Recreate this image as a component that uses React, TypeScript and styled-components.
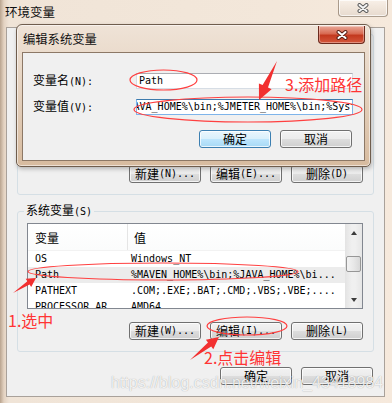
import styled, { createGlobalStyle } from "styled-components";

const GlobalStyle = createGlobalStyle`
  html, body {
    margin: 0;
    padding: 0;
    overflow: hidden;
    background: #f1e5d8;
  }
  body {
    font-family: "Noto Sans CJK SC", "Liberation Sans", sans-serif;
  }
`;

const Screen = styled.div`
  position: relative;
  width: 392px;
  height: 403px;
  overflow: hidden;
  display: flex;
  flex-direction: column;
  background: linear-gradient(90deg, #b9a48f 0px, #e4d3c2 4px, #f0e4d7 9px, #f3e7da 70%, #f6e9dc 100%);
  font-size: 12px;
  color: #000;
`;

const TitleBar = styled.div`
  height: 27px;
  flex-shrink: 0;
  display: flex;
  justify-content: space-between;
  align-items: flex-start;
  padding: 0 4px 0 5px;
`;

const Caption = styled.span`
  margin-top: 5px;
  font-size: 12.5px;
  line-height: 14px;
  color: #111;
`;

const CloseButton = styled.div<{ $red?: boolean }>`
  width: ${(p) => (p.$red ? 47 : 50)}px;
  height: ${(p) => (p.$red ? 18 : 17)}px;
  margin-top: ${(p) => (p.$red ? 1 : 0)}px;
  box-sizing: border-box;
  display: flex;
  align-items: center;
  justify-content: center;
  border: 1px solid ${(p) => (p.$red ? "#6b2a1d" : "rgba(110, 90, 70, 0.55)")};
  border-top: none;
  border-radius: 0 0 4px 4px;
  background: ${(p) =>
    p.$red
      ? "linear-gradient(#e9a898 0%, #d86a52 45%, #c3391f 55%, #d4573c 100%)"
      : "linear-gradient(#f8f0e8 0%, #f0e5da 50%, #e7dace 100%)"};
  box-shadow: inset 0 0 0 1px rgba(255, 255, 255, ${(p) => (p.$red ? 0.35 : 0.7)});
`;

const OuterBody = styled.div`
  flex: 1;
  margin: 0 7px 6px 6px;
  border: 1px solid #a9a19a;
  background: #f0f0f0;
  padding: 0 10px 0 10px;
  display: flex;
  flex-direction: column;
`;

const Group = styled.fieldset<{ $gap: number; $top: number }>`
  margin: ${(p) => p.$gap}px 0 0 0;
  padding: ${(p) => p.$top}px 10px 11px 9px;
  border: 1px solid #d5dfe5;
  border-radius: 3px;
  min-width: 0;
`;

const Legend = styled.legend`
  padding: 0 2px;
  margin-left: -3px;
  font-size: 12px;
  line-height: 12px;
`;

const ListBox = styled.div<{ $h: number }>`
  height: ${(p) => p.$h}px;
  box-sizing: border-box;
  border: 1px solid #828790;
  background: #fff;
  display: flex;
  overflow: hidden;
`;

const Table = styled.div`
  flex: 1;
  min-width: 0;
`;

const HeaderRow = styled.div`
  height: 26px;
  display: grid;
  grid-template-columns: 100px 1fr;
  background: linear-gradient(#ffffff, #fbfcfc);
  border-bottom: 1px solid #f2f2f2;
`;

const HeaderCell = styled.div<{ $pad: number; $sep?: boolean }>`
  display: flex;
  align-items: center;
  padding-left: ${(p) => p.$pad}px;
  border-right: ${(p) => (p.$sep ? "1px solid #e5e5e5" : "none")};
  font-size: 12px;
`;

const Row = styled.div<{ $selected?: boolean }>`
  height: 16px;
  display: grid;
  grid-template-columns: 100px 1fr;
  background: ${(p) => (p.$selected ? "#ececec" : "transparent")};
`;

const Cell = styled.div<{ $pad: number }>`
  padding-left: ${(p) => p.$pad}px;
  font-family: "DejaVu Sans Mono", "Liberation Mono", monospace;
  font-size: 10px;
  line-height: 16px;
  white-space: nowrap;
  overflow: hidden;
`;

const ScrollBar = styled.div`
  width: 17px;
  flex-shrink: 0;
  display: flex;
  flex-direction: column;
  background: linear-gradient(90deg, #e3e3e3, #f0f0f0 40%, #f0f0f0 60%, #e6e6e6);
`;

const ScrollArrow = styled.div`
  height: 17px;
  display: flex;
  align-items: center;
  justify-content: center;
`;

const Tri = styled.div<{ $up?: boolean }>`
  width: 0;
  height: 0;
  border-left: 3.5px solid transparent;
  border-right: 3.5px solid transparent;
  border-${(p) => (p.$up ? "bottom" : "top")}: 4px solid #3c3c3c;
`;

const Track = styled.div`
  flex: 1;
  padding-top: 15px;
`;

const Thumb = styled.div`
  height: 16px;
  margin: 0 1px;
  box-sizing: border-box;
  border: 1px solid #979797;
  border-radius: 2px;
  background: linear-gradient(90deg, #f3f3f3, #e8e8e8 50%, #d8d8d8);
`;

const ButtonRow = styled.div<{ $gap: number; $right?: number }>`
  margin-top: ${(p) => p.$gap}px;
  margin-right: ${(p) => p.$right ?? 0}px;
  display: flex;
  justify-content: flex-end;
  gap: 9px;
`;

const Button = styled.button<{ $default?: boolean }>`
  width: 72px;
  height: 18px;
  padding: 0;
  box-sizing: border-box;
  display: flex;
  align-items: center;
  justify-content: center;
  border: 1px solid ${(p) => (p.$default ? "#3c7fb1" : "#707070")};
  border-radius: 3px;
  background: ${(p) =>
    p.$default
      ? "linear-gradient(#eaf6fd 0%, #d9f0fc 50%, #bee6fd 51%, #a7d9f5 100%)"
      : "linear-gradient(#f2f2f2 0%, #ebebeb 50%, #dddddd 51%, #cfcfcf 100%)"};
  box-shadow: inset 0 0 0 1px rgba(255, 255, 255, 0.75);
  font-family: inherit;
  font-size: 12px;
  line-height: 14px;
  color: #000;
`;

const Mono = styled.span`
  font-family: "DejaVu Sans Mono", "Liberation Mono", monospace;
  font-size: 10px;
`;

/* the edit dialog that sits over the environment window */
const Dialog = styled.div`
  position: absolute;
  left: 16px;
  top: 24px;
  width: 355px;
  height: 143px;
  box-sizing: border-box;
  display: flex;
  flex-direction: column;
  padding: 0 5px 5px 5px;
  border: 1px solid #6f5d4d;
  border-radius: 6px 6px 5px 5px;
  background: linear-gradient(#efe3d7 0%, #e6d4c2 40%, #d7bb9f 100%);
  box-shadow: inset 0 0 0 1px rgba(255, 255, 255, 0.55), 1px 2px 4px rgba(0, 0, 0, 0.25);
`;

const DialogTitle = styled.div`
  height: 27px;
  flex-shrink: 0;
  display: flex;
  justify-content: space-between;
  align-items: flex-start;
  padding-left: 1px;
`;

const DialogCaption = styled.span`
  margin-top: 7px;
  font-size: 12.3px;
  line-height: 14px;
  color: #111;
`;

const DialogBody = styled.div`
  flex: 1;
  border: 1px solid #8c7866;
  background: #f0f0f0;
  padding: 20px 11px 0 10px;
`;

const Form = styled.div`
  display: grid;
  grid-template-columns: 103px 217px;
  row-gap: 10px;
  align-items: center;
`;

const Label = styled.span`
  font-size: 12px;
  line-height: 14px;
`;

const Field = styled.div<{ $focus?: boolean }>`
  height: 16px;
  box-sizing: border-box;
  border: 1px solid ${(p) => (p.$focus ? "#7eb4ea" : "#d6dde5")};
  border-top-color: ${(p) => (p.$focus ? "#3d7bad" : "#abadb3")};
  background: #fff;
  padding-left: 2px;
  overflow: hidden;
  white-space: nowrap;
  font-family: "DejaVu Sans Mono", "Liberation Mono", monospace;
  font-size: 10px;
  line-height: 14px;
`;

const Scrolled = styled.span`
  display: inline-block;
  margin-left: -17.5px;
`;

/* red hand-drawn notes */
const Notes = styled.svg`
  position: absolute;
  left: 0;
  top: 0;
  pointer-events: none;
`;

const Note = styled.span<{ $x: number; $y: number }>`
  position: absolute;
  left: ${(p) => p.$x}px;
  top: ${(p) => p.$y}px;
  font-size: 16px;
  line-height: 16px;
  color: #ff3434;
  white-space: nowrap;
`;

const Watermark = styled.span`
  position: absolute;
  left: 111px;
  top: 374px;
  font-family: "Liberation Sans", Arial, sans-serif;
  font-size: 16px;
  line-height: 18px;
  color: rgba(255, 255, 255, 0.85);
  text-shadow: 0 0 1px rgba(0, 0, 0, 0.35);
  white-space: nowrap;
`;

function CloseX({ fill, outline }: { fill: string; outline: string }) {
  return (
    <svg width="12" height="10" viewBox="0 0 12 10">
      <path d="M2.5 2 L9.5 8 M9.5 2 L2.5 8" stroke={outline} strokeWidth="4" strokeLinecap="round" />
      <path d="M2.5 2 L9.5 8 M9.5 2 L2.5 8" stroke={fill} strokeWidth="2" strokeLinecap="round" />
    </svg>
  );
}

function arrow(x1: number, y1: number, x2: number, y2: number, head: number, half: number, shaft: number) {
  const len = Math.hypot(x2 - x1, y2 - y1);
  const ux = (x2 - x1) / len;
  const uy = (y2 - y1) / len;
  const nx = -uy;
  const ny = ux;
  const bx = x2 - ux * head;
  const by = y2 - uy * head;
  const pts = [
    [x1, y1],
    [bx + nx * shaft, by + ny * shaft],
    [bx + nx * half, by + ny * half],
    [x2, y2],
    [bx - nx * half, by - ny * half],
    [bx - nx * shaft, by - ny * shaft],
  ];
  return pts.map((p) => p.map((v) => v.toFixed(1)).join(",")).join(" ");
}

const rows = [
  { name: "OS", value: "Windows_NT" },
  { name: "Path", value: "%MAVEN_HOME%\\bin;%JAVA_HOME%\\bi...", selected: true },
  { name: "PATHEXT", value: ".COM;.EXE;.BAT;.CMD;.VBS;.VBE;...." },
  { name: "PROCESSOR_AR", value: "AMD64" },
];

export default function App() {
  return (
    <>
      <GlobalStyle />
      <Screen>
        <TitleBar>
          <Caption>环境变量</Caption>
          <CloseButton>
            <CloseX fill="#f4f4f4" outline="#5d5d5d" />
          </CloseButton>
        </TitleBar>

        <OuterBody>
          <Group $gap={0} $top={6}>
            <Legend>用户变量(U)</Legend>
            <ListBox $h={105} />
            <ButtonRow $gap={14}>
              <Button>新建<Mono>(N)...</Mono></Button>
              <Button>编辑<Mono>(E)...</Mono></Button>
              <Button>删除<Mono>(D)</Mono></Button>
            </ButtonRow>
          </Group>

          <Group $gap={9} $top={5}>
            <Legend>系统变量<Mono>(S)</Mono></Legend>
            <ListBox $h={86}>
              <Table>
                <HeaderRow>
                  <HeaderCell $pad={7} $sep>变量</HeaderCell>
                  <HeaderCell $pad={6}>值</HeaderCell>
                </HeaderRow>
                {rows.map((r) => (
                  <Row key={r.name} $selected={r.selected}>
                    <Cell $pad={7}>{r.name}</Cell>
                    <Cell $pad={3}>{r.value}</Cell>
                  </Row>
                ))}
              </Table>
              <ScrollBar>
                <ScrollArrow>
                  <Tri $up />
                </ScrollArrow>
                <Track>
                  <Thumb />
                </Track>
                <ScrollArrow>
                  <Tri />
                </ScrollArrow>
              </ScrollBar>
            </ListBox>
            <ButtonRow $gap={13}>
              <Button>新建<Mono>(W)...</Mono></Button>
              <Button>编辑<Mono>(I)...</Mono></Button>
              <Button>删除<Mono>(L)</Mono></Button>
            </ButtonRow>
          </Group>

          <ButtonRow $gap={15} $right={1}>
            <Button>确定</Button>
            <Button>取消</Button>
          </ButtonRow>
        </OuterBody>

        <Dialog>
          <DialogTitle>
            <DialogCaption>编辑系统变量</DialogCaption>
            <CloseButton $red>
              <CloseX fill="#ffffff" outline="#5a2218" />
            </CloseButton>
          </DialogTitle>
          <DialogBody>
            <Form>
              <Label>变量名<Mono>(N):</Mono></Label>
              <Field>Path</Field>
              <Label>变量值<Mono>(V):</Mono></Label>
              <Field $focus>
                <Scrolled>%JAVA_HOME%\bin;%JMETER_HOME%\bin;%SystemRoot%\system32</Scrolled>
              </Field>
            </Form>
            <ButtonRow $gap={15} $right={1}>
              <Button $default>确定</Button>
              <Button>取消</Button>
            </ButtonRow>
          </DialogBody>
        </Dialog>

        <Notes width="392" height="403" viewBox="0 0 392 403">
          <g fill="none" stroke="#ff4040" strokeWidth="1.2">
            <ellipse cx="163.5" cy="80" rx="33.5" ry="10" />
            <ellipse cx="248" cy="109.5" rx="114" ry="12.5" />
            <ellipse cx="163" cy="271.5" rx="135" ry="8.5" />
            <ellipse cx="247" cy="326" rx="40" ry="9" />
          </g>
          <g fill="#f23030">
            <polygon points={arrow(277, 61, 259, 100, 15, 7, 3)} />
            <polygon points={arrow(13, 293, 36, 278, 9, 5, 2)} />
            <polygon points={arrow(190, 360, 219, 337, 12, 6, 2.5)} />
          </g>
        </Notes>
        <Note $x={285} $y={76}>3.添加路径</Note>
        <Note $x={8} $y={312}>1.选中</Note>
        <Note $x={204} $y={349}>2.点击编辑</Note>
        <Watermark>https://blog.csdn.net/weixin_43418984</Watermark>
      </Screen>
    </>
  );
}
